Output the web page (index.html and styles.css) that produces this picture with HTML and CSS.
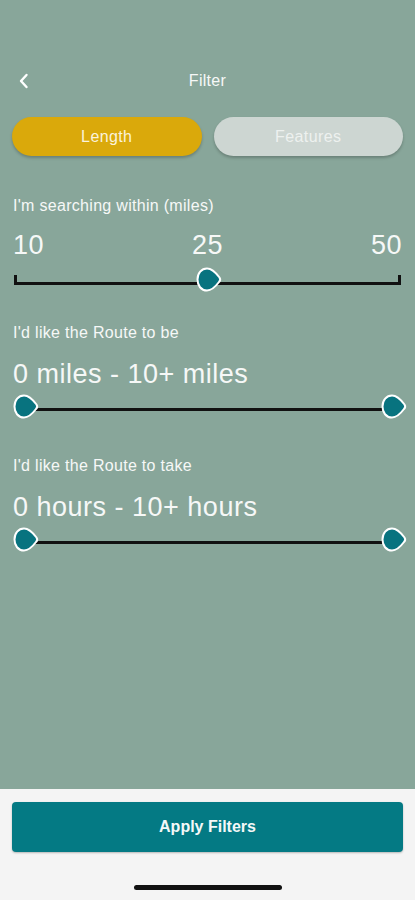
FILE: index.html
```html
<!DOCTYPE html>
<html lang="en">
<head>
    <meta charset="UTF-8">
    <meta name="viewport" content="width=device-width, initial-scale=1.0">
    <title>Filter</title>
    <link rel="stylesheet" href="styles.css">
</head>
<body>
    <div class="screen">
        <div class="main">
            <div class="header">
                <svg class="back" width="12" height="16" viewBox="0 0 12 16">
                    <path d="M8.5 2 L3 8 L8.5 14" fill="none" stroke="#fff" stroke-width="2.4" stroke-linecap="round" stroke-linejoin="round"/>
                </svg>
                <div class="title">Filter</div>
            </div>

            <div class="tabs">
                <div class="tab tab-on">Length</div>
                <div class="tab tab-off">Features</div>
            </div>

            <div class="group group-first">
                <div class="label">I'm searching within (miles)</div>
                <div class="nums">
                    <span>10</span>
                    <span>25</span>
                    <span>50</span>
                </div>
                <div class="slider slider-ticks">
                    <div class="track"></div>
                    <svg class="thumb thumb-mid" width="28" height="27" viewBox="0 0 28 27">
                        <path d="M12 2.5 C17 2.5 21.5 7.5 24.5 11.5 C25.5 13 25.5 14.5 24 16 C21 20 17 24.5 12 24.5 C6 24.5 2.5 19.5 2.5 13.5 C2.5 7 6.5 2.5 12 2.5 Z" fill="#08737f" stroke="#fff" stroke-width="2"/>
                    </svg>
                </div>
            </div>

            <div class="group group-second">
                <div class="label">I'd like the Route to be</div>
                <div class="value">0 miles - 10+ miles</div>
                <div class="slider">
                    <div class="track track-range"></div>
                    <svg class="thumb thumb-left" width="28" height="27" viewBox="0 0 28 27">
                        <path d="M12 2.5 C17 2.5 21.5 7.5 24.5 11.5 C25.5 13 25.5 14.5 24 16 C21 20 17 24.5 12 24.5 C6 24.5 2.5 19.5 2.5 13.5 C2.5 7 6.5 2.5 12 2.5 Z" fill="#08737f" stroke="#fff" stroke-width="2"/>
                    </svg>
                    <svg class="thumb thumb-right" width="28" height="27" viewBox="0 0 28 27">
                        <path d="M12 2.5 C17 2.5 21.5 7.5 24.5 11.5 C25.5 13 25.5 14.5 24 16 C21 20 17 24.5 12 24.5 C6 24.5 2.5 19.5 2.5 13.5 C2.5 7 6.5 2.5 12 2.5 Z" fill="#08737f" stroke="#fff" stroke-width="2"/>
                    </svg>
                </div>
            </div>

            <div class="group group-third">
                <div class="label">I'd like the Route to take</div>
                <div class="value">0 hours - 10+ hours</div>
                <div class="slider">
                    <div class="track track-range"></div>
                    <svg class="thumb thumb-left" width="28" height="27" viewBox="0 0 28 27">
                        <path d="M12 2.5 C17 2.5 21.5 7.5 24.5 11.5 C25.5 13 25.5 14.5 24 16 C21 20 17 24.5 12 24.5 C6 24.5 2.5 19.5 2.5 13.5 C2.5 7 6.5 2.5 12 2.5 Z" fill="#08737f" stroke="#fff" stroke-width="2"/>
                    </svg>
                    <svg class="thumb thumb-right" width="28" height="27" viewBox="0 0 28 27">
                        <path d="M12 2.5 C17 2.5 21.5 7.5 24.5 11.5 C25.5 13 25.5 14.5 24 16 C21 20 17 24.5 12 24.5 C6 24.5 2.5 19.5 2.5 13.5 C2.5 7 6.5 2.5 12 2.5 Z" fill="#08737f" stroke="#fff" stroke-width="2"/>
                    </svg>
                </div>
            </div>
        </div>

        <div class="footer">
            <div class="apply">Apply Filters</div>
            <div class="home-bar"></div>
        </div>
    </div>
</body>
</html>
```

FILE: styles.css
```css
* {
    box-sizing: border-box;
}
body {
    margin: 0;
    font-family: "Liberation Sans", Arial, sans-serif;
    background: #f4f4f4;
}
.screen {
    width: 415px;
    height: 900px;
    display: flex;
    flex-direction: column;
}
.main {
    flex: 1;
    background: #88a69a;
    padding: 66px 12px 0;
    color: #f6f8f7;
}
.header {
    position: relative;
    height: 30px;
    display: flex;
    align-items: center;
    justify-content: center;
}
.back {
    position: absolute;
    left: 6px;
    top: 7px;
}
.title {
    font-size: 16px;
    letter-spacing: 0.3px;
}
.tabs {
    margin-top: 21px;
    display: flex;
    gap: 12px;
}
.tab {
    flex: 1;
    height: 39px;
    border-radius: 20px;
    display: flex;
    align-items: center;
    justify-content: center;
    font-size: 16px;
    letter-spacing: 0.4px;
    box-shadow: 0 2px 3px rgba(0, 0, 0, 0.22);
}
.tab-on {
    background: #daa90b;
    color: #fbf3dc;
}
.tab-off {
    background: #cdd6d2;
    color: #edf1ef;
}
.label {
    height: 20px;
    line-height: 20px;
    font-size: 16px;
    letter-spacing: 0.3px;
    padding-left: 1px;
}
.nums {
    margin-top: 14px;
    height: 30px;
    line-height: 30px;
    font-size: 27px;
    display: flex;
    justify-content: space-between;
    letter-spacing: 0.5px;
    padding: 0 1px;
}
.value {
    margin-top: 16px;
    height: 30px;
    line-height: 30px;
    font-size: 27px;
    letter-spacing: 0.5px;
    padding-left: 1px;
}
.group-first {
    margin-top: 40px;
}
.group-first .slider {
    margin-top: 6px;
}
.group-second {
    margin-top: 27px;
}
.group-third {
    margin-top: 33px;
}
.slider {
    position: relative;
    height: 30px;
    margin-top: 4px;
}
.track {
    position: absolute;
    left: 2px;
    right: 2px;
    top: 16px;
    height: 3px;
    background: #111;
}
.slider-ticks .track::before,
.slider-ticks .track::after {
    content: "";
    position: absolute;
    bottom: 0;
    width: 3px;
    height: 10px;
    background: #111;
}
.slider-ticks .track::before {
    left: 0;
}
.slider-ticks .track::after {
    right: 0;
}
.track-range {
    left: 14px;
    right: 14px;
    top: 15px;
}
.thumb {
    position: absolute;
    top: 0;
}
.thumb-mid {
    left: 183px;
}
.thumb-left {
    left: 0;
}
.thumb-right {
    right: -5px;
}
.footer {
    height: 111px;
    background: #f4f4f4;
    padding: 13px 12px 0;
    display: flex;
    flex-direction: column;
    align-items: center;
}
.apply {
    width: 100%;
    height: 50px;
    border-radius: 4px;
    background: #047a84;
    color: #f4f8f8;
    font-weight: bold;
    font-size: 16px;
    display: flex;
    align-items: center;
    justify-content: center;
    box-shadow: 0 1px 2px rgba(0, 0, 0, 0.25);
}
.home-bar {
    margin-top: 33px;
    width: 148px;
    height: 5px;
    border-radius: 3px;
    background: #111;
}
```
